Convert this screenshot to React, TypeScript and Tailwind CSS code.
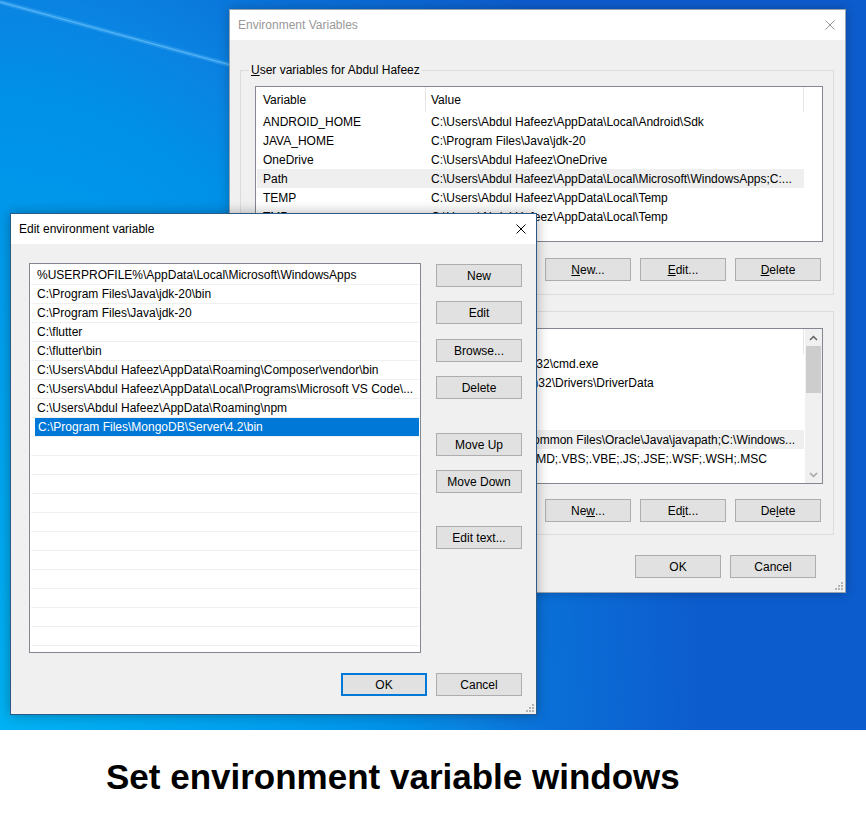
import React from "react";

const R = String.raw;

function CloseX({ color }: { color: string }) {
  return (
    <svg width="10" height="10" viewBox="0 0 10 10" className="shrink-0">
      <path d="M0.5 0.5L9.5 9.5M9.5 0.5L0.5 9.5" stroke={color} strokeWidth="1" fill="none" />
    </svg>
  );
}

function Grip() {
  return (
    <svg width="8" height="8" viewBox="0 0 8 8">
      <g fill="#b4b4b4">
        <rect x="6" y="0" width="2" height="2" />
        <rect x="3" y="3" width="2" height="2" />
        <rect x="6" y="3" width="2" height="2" />
        <rect x="0" y="6" width="2" height="2" />
        <rect x="3" y="6" width="2" height="2" />
        <rect x="6" y="6" width="2" height="2" />
      </g>
    </svg>
  );
}

function Btn({ children, def = false, className = "" }: { children: React.ReactNode; def?: boolean; className?: string }) {
  return (
    <div
      className={`w-[86px] h-[23px] shrink-0 flex items-center justify-center bg-[#e1e1e1] text-[12px] text-black ${
        def ? "border-2 border-[#0078d7]" : "border border-[#adadad]"
      } ${className}`}
    >
      {children}
    </div>
  );
}

type Row = { name: string; value: string; sel?: boolean };

const userRows: Row[] = [
  { name: "ANDROID_HOME", value: R`C:\Users\Abdul Hafeez\AppData\Local\Android\Sdk` },
  { name: "JAVA_HOME", value: R`C:\Program Files\Java\jdk-20` },
  { name: "OneDrive", value: R`C:\Users\Abdul Hafeez\OneDrive` },
  { name: "Path", value: R`C:\Users\Abdul Hafeez\AppData\Local\Microsoft\WindowsApps;C:...`, sel: true },
  { name: "TEMP", value: R`C:\Users\Abdul Hafeez\AppData\Local\Temp` },
  { name: "TMP", value: R`C:\Users\Abdul Hafeez\AppData\Local\Temp` },
];

const sysRows: Row[] = [
  { name: "ComSpec", value: R`C:\Windows\system32\cmd.exe` },
  { name: "DriverData", value: R`C:\Windows\System32\Drivers\DriverData` },
  { name: "NUMBER_OF_PROCESSORS", value: "8" },
  { name: "OS", value: "Windows_NT" },
  { name: "Path", value: R`C:\Program Files\Common Files\Oracle\Java\javapath;C:\Windows...`, sel: true },
  { name: "PATHEXT", value: ".COM;.EXE;.BAT;.CMD;.VBS;.VBE;.JS;.JSE;.WSF;.WSH;.MSC" },
  { name: "PROCESSOR_ARCHITECTURE", value: "AMD64" },
];

function ListHeader() {
  return (
    <div className="h-[25px] flex items-stretch text-[12px] shrink-0">
      <div className="w-[170px] pl-[7px] flex items-center border-r border-[#e5e5e5]">Variable</div>
      <div className="w-[378px] pl-[5px] flex items-center border-r border-[#e5e5e5]">Value</div>
    </div>
  );
}

function ListRows({ rows }: { rows: Row[] }) {
  return (
    <div className="flex flex-col">
      {rows.map((r) => (
        <div
          key={r.name}
          className={`ml-[1px] w-[547px] h-[19px] flex items-center text-[12px] whitespace-nowrap ${r.sel ? "bg-[#efefef]" : ""}`}
        >
          <div className="w-[168px] pl-[6px] overflow-hidden">{r.name}</div>
          <div className="flex-1 pl-[6px] overflow-hidden">{r.value}</div>
        </div>
      ))}
    </div>
  );
}

function Scrollbar() {
  return (
    <div className="w-[17px] h-full bg-[#f0f0f0] flex flex-col shrink-0">
      <div className="h-[17px] flex items-center justify-center">
        <svg width="9" height="6" viewBox="0 0 9 6">
          <path d="M1 5L4.5 1.5L8 5" stroke="#606060" strokeWidth="1.5" fill="none" />
        </svg>
      </div>
      <div className="mx-[1px] h-[47px] bg-[#cdcdcd]" />
      <div className="flex-1" />
      <div className="h-[17px] flex items-center justify-center">
        <svg width="9" height="6" viewBox="0 0 9 6">
          <path d="M1 1L4.5 4.5L8 1" stroke="#a3a3a3" strokeWidth="1.5" fill="none" />
        </svg>
      </div>
    </div>
  );
}

function EnvWindow() {
  return (
    <div className="absolute left-[229px] top-[9px] w-[617px] h-[584px] border border-[#9aa4ae] bg-[#f0f0f0] flex flex-col shadow-[0_0_10px_rgba(0,0,0,0.25)]">
      <div className="h-[30px] shrink-0 bg-white flex items-center justify-between pl-[8px] pr-[10px]">
        <span className="text-[12px] text-[#999999]">Environment Variables</span>
        <CloseX color="#999999" />
      </div>
      <div className="flex-1 flex flex-col pl-[10px] pr-[11px] pt-[22px] relative">
        <fieldset className="border border-[#dcdcdc] pl-[8px] pr-[10px] pt-[8px] pb-[13px]">
          <legend className="px-[2px] leading-[16px] text-[12px]">
            <span className="underline">U</span>ser variables for Abdul Hafeez
          </legend>
          <div className="ml-[6px] h-[156px] border border-[#828790] bg-white overflow-hidden flex flex-col">
            <ListHeader />
            <ListRows rows={userRows} />
          </div>
          <div className="mt-[16px] pr-[2px] flex justify-end gap-[9px]">
            <Btn>
              <span className="underline">N</span>ew...
            </Btn>
            <Btn>
              <span className="underline">E</span>dit...
            </Btn>
            <Btn>
              <span className="underline">D</span>elete
            </Btn>
          </div>
        </fieldset>
        <fieldset className="mt-[8px] border border-[#dcdcdc] pl-[8px] pr-[10px] pt-[9px] pb-[12px]">
          <legend className="px-[2px] leading-[16px] text-[12px]">
            <span className="underline">S</span>ystem variables
          </legend>
          <div className="ml-[6px] h-[156px] border border-[#828790] bg-white overflow-hidden flex">
            <div className="flex-1 flex flex-col overflow-hidden">
              <ListHeader />
              <ListRows rows={sysRows} />
            </div>
            <Scrollbar />
          </div>
          <div className="mt-[15px] pr-[2px] flex justify-end gap-[9px]">
            <Btn>
              Ne<span className="underline">w</span>...
            </Btn>
            <Btn>
              Ed<span className="underline">i</span>t...
            </Btn>
            <Btn>
              De<span className="underline">l</span>ete
            </Btn>
          </div>
        </fieldset>
        <div className="mt-[20px] pr-[18px] flex justify-end gap-[9px]">
          <Btn>OK</Btn>
          <Btn>Cancel</Btn>
        </div>
        <div className="absolute right-[2px] bottom-[2px]">
          <Grip />
        </div>
      </div>
    </div>
  );
}

const editItems: string[] = [
  R`%USERPROFILE%\AppData\Local\Microsoft\WindowsApps`,
  R`C:\Program Files\Java\jdk-20\bin`,
  R`C:\Program Files\Java\jdk-20`,
  R`C:\flutter`,
  R`C:\flutter\bin`,
  R`C:\Users\Abdul Hafeez\AppData\Roaming\Composer\vendor\bin`,
  R`C:\Users\Abdul Hafeez\AppData\Local\Programs\Microsoft VS Code\...`,
  R`C:\Users\Abdul Hafeez\AppData\Roaming\npm`,
  R`C:\Program Files\MongoDB\Server\4.2\bin`,
];

function EditWindow() {
  const rows: (string | null)[] = [...editItems];
  while (rows.length < 20) rows.push(null);
  return (
    <div className="absolute left-[10px] top-[213px] w-[527px] h-[502px] border border-[#2b5a86] bg-[#f0f0f0] flex flex-col shadow-[0_0_12px_rgba(0,0,0,0.3)]">
      <div className="h-[30px] shrink-0 bg-white flex items-center justify-between pl-[8px] pr-[10px]">
        <span className="text-[12px] text-black">Edit environment variable</span>
        <CloseX color="#000000" />
      </div>
      <div className="flex-1 flex flex-col pl-[18px] pr-[14px] pt-[19px] relative">
        <div className="flex">
          <div className="w-[392px] h-[390px] border border-[#828790] bg-white overflow-hidden px-[1px] pt-[2px]">
            {rows.map((t, i) => {
              const sel = i === 8;
              return (
                <div key={i} className="h-[19px] border-b border-[#f0f0f0] text-[12px] whitespace-nowrap overflow-hidden">
                  {sel ? (
                    <div className="ml-[4px] h-[18px] bg-[#0078d7] text-white pl-[3px] flex items-center">{t}</div>
                  ) : (
                    <div className="h-[18px] pl-[6px] flex items-center">{t}</div>
                  )}
                </div>
              );
            })}
          </div>
          <div className="ml-[15px] pt-[1px] flex flex-col">
            <Btn>New</Btn>
            <Btn className="mt-[14px]">Edit</Btn>
            <Btn className="mt-[15px]">Browse...</Btn>
            <Btn className="mt-[14px]">Delete</Btn>
            <Btn className="mt-[34px]">Move Up</Btn>
            <Btn className="mt-[14px]">Move Down</Btn>
            <Btn className="mt-[33px]">Edit text...</Btn>
          </div>
        </div>
        <div className="mt-[20px] flex justify-end gap-[9px]">
          <Btn def>OK</Btn>
          <Btn>Cancel</Btn>
        </div>
        <div className="absolute right-[2px] bottom-[2px]">
          <Grip />
        </div>
      </div>
    </div>
  );
}

export default function App() {
  return (
    <div className="w-[866px] h-[824px] bg-white font-['Liberation_Sans',Arial,sans-serif] text-black overflow-hidden">
      <div className="relative h-[730px] overflow-hidden bg-[radial-gradient(ellipse_700px_1100px_at_0%_100%,#00b2f3_0%,#009eee_40%,#0090e8_58%,#0a84e2_66%,#0a70d8_78%,#0d5ccd_100%)]">
        <svg className="absolute left-0 top-0" width="300" height="100" viewBox="0 0 300 100">
          <line x1="0" y1="2" x2="300" y2="84" stroke="#6cc6ff" strokeOpacity="0.25" strokeWidth="5" />
          <line x1="0" y1="2" x2="300" y2="84" stroke="#7fd0ff" strokeOpacity="0.5" strokeWidth="1.5" />
        </svg>
        <EnvWindow />
        <EditWindow />
      </div>
      <div className="pl-[106px] pt-[29px] text-[35px] leading-[35px] font-bold whitespace-nowrap">
        Set environment variable windows
      </div>
    </div>
  );
}
